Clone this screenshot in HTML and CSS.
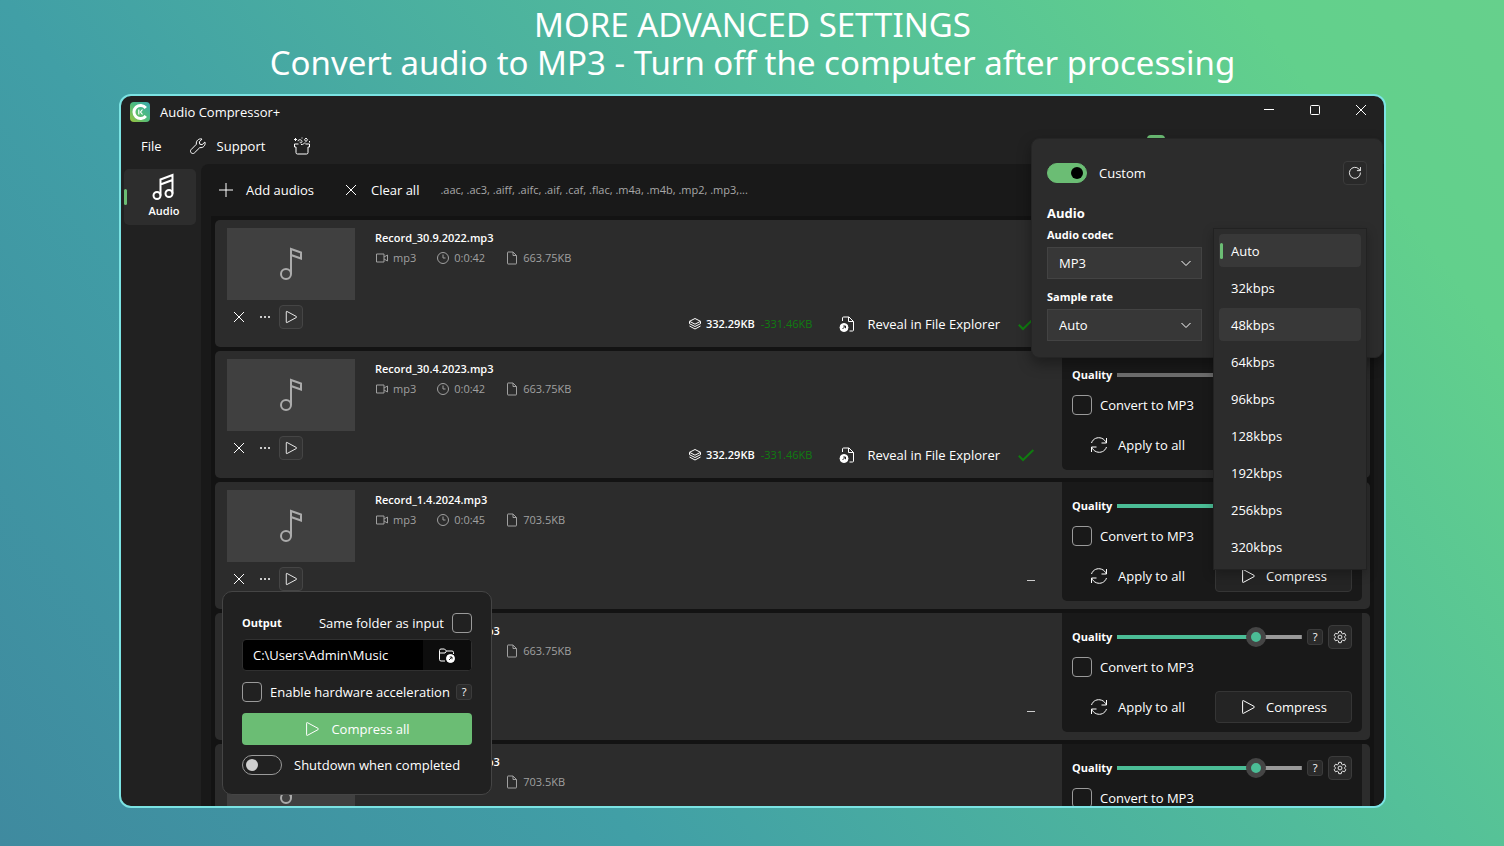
FILE: index.html
```html
<!DOCTYPE html>
<html lang="en">
<head>
<meta charset="utf-8">
<title>Audio Compressor+</title>
<link rel="stylesheet" href="styles.css">
</head>
<body>
<svg class="defs" aria-hidden="true">
  <symbol id="i-x" viewBox="0 0 16 16"><path d="M3 3l10 10M13 3L3 13"/></symbol>
  <symbol id="i-plus" viewBox="0 0 16 16"><path d="M8 1v14M1 8h14"/></symbol>
  <symbol id="i-play" viewBox="0 0 16 16"><path d="M2.600 2.200v11.600q0 1 .9.5l10.600-5.700q.9-.6 0-1.200L3.500 1.700q-.9-.5-.9.5z"/></symbol>
  <symbol id="i-dots" viewBox="0 0 16 16"><path d="M4 8h.01M8 8h.01M12 8h.01" stroke-width="2" stroke-linecap="round"/></symbol>
  <symbol id="i-chev" viewBox="0 0 16 16"><path d="M3.500 6l4.500 4.500L12.500 6"/></symbol>
  <symbol id="i-check" viewBox="0 0 16 16"><path d="M.8 8.800l4.200 4.200L15.300 3"/></symbol>
  <symbol id="i-wrench" viewBox="0 0 16 16"><path d="M14.900 4l-2.800 2.700-2.300-.5-.5-2.300L12 1.100C9 .1 5.700 2.700 6.400 6.200L1 11.700c-1.800 2.100 1.200 5.100 3.300 3.300l5.500-5.400c3.500.7 6.100-2.600 5.100-5.600z"/></symbol>
  <symbol id="i-gift" viewBox="0 0 18 18"><path d="M5.500 7H1.500v3h1.500v5.500q0 1.500 1.500 1.500h9q1.500 0 1.500-1.500V10h1.500V7h-4"/><path d="M5 4.200c0-2 3.800-2 4 .3.100 1.800-2.400 1.700-2 .2M8 7.500c2.500.5 3-2 4.500-1.500M13 1l1.500 1.800L13 4.600l-1.500-1.800zM2.500 1v3M1 2.500h3M16.500 4v1.500M8.500 1h1"/></symbol>
  <symbol id="i-notes" viewBox="0 0 24 28"><circle cx="5" cy="22.500" r="3.500"/><circle cx="17" cy="20.500" r="3.500"/><path d="M8.500 22.500V6.500l12-4.500v18.500M8.500 11.500l12-4.500"/></symbol>
  <symbol id="i-note" viewBox="0 0 24 34"><circle cx="7" cy="27" r="5"/><path d="M12 27V2l10 3.500v6L12 8"/></symbol>
  <symbol id="i-video" viewBox="0 0 14 14"><path d="M1.500 3h7.500v8H1.500zM9 6l3.500-2v6L9 8"/></symbol>
  <symbol id="i-clock" viewBox="0 0 14 14"><circle cx="7" cy="7" r="5.500"/><path d="M7 3.500V7h2.500"/></symbol>
  <symbol id="i-file" viewBox="0 0 14 14"><path d="M3 1h5l3.500 3.500v8q0 .5-.5.5H3q-.5 0-.5-.5v-11Q2.500 1 3 1zM8 1v3.500h3.500"/></symbol>
  <symbol id="i-layers" viewBox="0 0 14 14"><path d="M7 1.500l5.500 2.800L7 7.200 1.500 4.300zM1.500 4.500v2.200L7 9.500l5.500-2.800V4.500M1.500 9L7 12l5.500-3"/></symbol>
  <symbol id="i-reveal" viewBox="0 0 16 16"><path d="M3.500 5V2q0-1 1-1H10l4.500 4.500V14q0 1-1 1h-3M9.500 1v4.500h5"/><circle cx="5" cy="11.500" r="4" fill="currentColor"/><path class="cut" d="M3.500 13L6.500 10M4.300 10h2.200v2.200"/></symbol>
  <symbol id="i-folder" viewBox="0 0 18 18"><path d="M7 15H3q-1.500 0-1.500-1.500v-9Q1.500 3 3 3h3.500L8.500 5H14q1.500 0 1.500 1.500V8M1.500 7H7l1.500-2"/><circle cx="12.500" cy="12.500" r="4" fill="currentColor"/><path class="cut" d="M11 14l3-3M11.700 11H14v2.300"/></symbol>
  <symbol id="i-sync" viewBox="0 0 18 18"><path d="M1.500 7C3 2.500 7.500.8 11.500 2.200 14 3 15.500 5 16.200 6.800M16.500 2v5h-5M16.500 11C15 15.500 10.500 17.200 6.500 15.800 4 15 2.500 13 1.800 11.200M1.500 16v-5h5"/></symbol>
  <symbol id="i-reset" viewBox="0 0 16 16"><path d="M14.200 7.500A6.300 6.300 0 1 1 12.500 3.500l1.500 1.700M14.200 1.200V5.300h-4"/></symbol>
  <symbol id="i-gear" viewBox="0 0 16 16"><circle cx="8" cy="8" r="2.200"/><path d="M6.600 1.500h2.800l.5 2.200 1.200.7 2.100-.7 1.500 2.500L13.100 7.700v.6l1.600 1.500-1.500 2.500-2.100-.7-1.200.7-.5 2.200H6.600l-.5-2.200-1.200-.7-2.100.7-1.500-2.500 1.600-1.500v-.6L1.300 6.200l1.500-2.500 2.100.7 1.200-.7z"/></symbol>
</svg>

<header class="promo">
  <h1>MORE ADVANCED SETTINGS</h1>
  <p>Convert audio to MP3 - Turn off the computer after processing</p>
</header>

<main class="window">
  <div class="titlebar">
    <svg class="logo" viewBox="0 0 20 20"><defs><linearGradient id="lg" x1="0" y1="1" x2="1" y2="0"><stop offset="0" stop-color="#9cc43c"/><stop offset=".5" stop-color="#4fbc7c"/><stop offset="1" stop-color="#3aa8b0"/></linearGradient></defs><rect width="20" height="20" rx="4" fill="url(#lg)"/><path d="M15.800 6A6.600 6.600 0 1 0 15.800 14" fill="none" stroke="#fff" stroke-width="3"/><path d="M8.800 7.500v5M12.500 7.500L10.500 10l2 2.500" fill="none" stroke="#fff" stroke-width="1.200"/></svg>
    <span class="app-name">Audio Compressor+</span>
    <div class="winbtns">
      <button aria-label="Minimize"><svg viewBox="0 0 16 16"><path d="M3 7.500h10"/></svg></button>
      <button aria-label="Maximize"><svg viewBox="0 0 16 16"><rect x="3.500" y="3.500" width="9" height="9" rx="1"/></svg></button>
      <button aria-label="Close"><svg><use href="#i-x"/></svg></button>
    </div>
  </div>
  <nav class="menubar">
    <button>File</button>
    <button class="support"><svg><use href="#i-wrench"/></svg>Support</button>
    <button aria-label="What's new"><svg class="gift"><use href="#i-gift"/></svg></button>
  </nav>
  <div class="body">
    <aside class="sidebar">
      <a class="tab" href="#audio"><svg><use href="#i-notes"/></svg>Audio</a>
    </aside>
    <section class="content">
      <div class="toolbar">
        <button><svg><use href="#i-plus"/></svg>Add audios</button>
        <button><svg><use href="#i-x"/></svg>Clear all</button>
        <span class="formats">.aac, .ac3, .aiff, .aifc, .aif, .caf, .flac, .m4a, .m4b, .mp2, .mp3,...</span>
      </div>
      <div class="list" id="list"></div>
    </section>
  </div>

  <section class="output">
    <div class="row between">
      <strong>Output</strong>
      <label class="check">Same folder as input<input type="checkbox"></label>
    </div>
    <div class="path">
      <input type="text" aria-label="Output folder" value="C:\Users\Admin\Music">
      <button aria-label="Browse"><svg><use href="#i-folder"/></svg></button>
    </div>
    <div class="row between">
      <label class="check"><input type="checkbox">Enable hardware acceleration</label>
      <button class="help" aria-label="Help">?</button>
    </div>
    <button class="primary"><svg><use href="#i-play"/></svg>Compress all</button>
    <label class="switch"><input type="checkbox" role="switch">Shutdown when completed</label>
  </section>

  <span class="peek"></span>
  <section class="custom">
    <div class="row between">
      <label class="switch"><input type="checkbox" role="switch" checked>Custom</label>
      <button class="icon-btn" aria-label="Reset"><svg><use href="#i-reset"/></svg></button>
    </div>
    <h2>Audio</h2>
    <div class="field">
      <label for="codec">Audio codec</label>
      <span class="select"><select id="codec"><option>MP3</option></select><svg><use href="#i-chev"/></svg></span>
    </div>
    <div class="field">
      <label for="rate">Sample rate</label>
      <span class="select"><select id="rate"><option>Auto</option></select><svg><use href="#i-chev"/></svg></span>
    </div>
    <div class="bitrates" role="listbox" aria-label="Bitrate">
      <button role="option" aria-selected="true">Auto</button>
      <button role="option">32kbps</button>
      <button role="option" class="hover">48kbps</button>
      <button role="option">64kbps</button>
      <button role="option">96kbps</button>
      <button role="option">128kbps</button>
      <button role="option">192kbps</button>
      <button role="option">256kbps</button>
      <button role="option">320kbps</button>
    </div>
  </section>
</main>
<script src="app.js"></script>
</body>
</html>
```

FILE: styles.css
```css
* { box-sizing: border-box; }
body {
  margin: 0;
  height: 100vh;
  padding: 6px 118px 38px 119px;
  display: flex;
  flex-direction: column;
  overflow: hidden;
  background: linear-gradient(53deg, #3f8a9f 0%, #419fa6 30%, #54c099 67%, #62d08c 88%, #66d08c 100%);
  color: #fff;
  font: 13px/20px "Open Sans", "Noto Sans", sans-serif;
}
button, input, select { font: inherit; color: inherit; margin: 0; }
button { background: none; border: 0; padding: 0; display: flex; align-items: center; white-space: nowrap; }
svg { width: 16px; height: 16px; fill: none; stroke: currentColor; flex: none; }
.defs { position: absolute; width: 0; height: 0; }
.cut { stroke: #222; }
.promo { text-align: center; padding-bottom: 12px; white-space: nowrap; }
.promo h1, .promo p { margin: 0; font: 33px/38px "Noto Sans", sans-serif; }

.window {
  position: relative;
  flex: 1;
  min-height: 0;
  display: flex;
  flex-direction: column;
  overflow: hidden;
  background: #212121;
  border: 2px solid #7be3e3;
  border-radius: 12px;
}
.titlebar { display: flex; align-items: center; height: 32px; padding-left: 9px; }
.logo { width: 20px; height: 20px; stroke: none; margin-right: 10px; }
.winbtns { display: flex; align-self: flex-start; margin-left: auto; }
.winbtns button { width: 46px; height: 28px; justify-content: center; }
.menubar { display: flex; align-items: center; height: 36px; padding-left: 20px; gap: 28px; }
.support { gap: 11px; }
.menubar .gift { width: 18px; height: 18px; }

.body { flex: 1; min-height: 0; display: flex; }
.sidebar { width: 80px; padding: 5px 5px 0 3px; }
.tab {
  position: relative;
  display: flex;
  flex-direction: column;
  align-items: center;
  height: 56px;
  padding: 4px 0 0 8px;
  background: #2d2d2d;
  border-radius: 5px;
  color: #fff;
  text-decoration: none;
  font-size: 11px;
  font-weight: 600;
}
.tab svg { width: 24px; height: 28px; stroke-width: 2; }
.tab::before {
  content: "";
  position: absolute;
  left: 0;
  top: 20px;
  width: 3px;
  height: 16px;
  border-radius: 2px;
  background: #6bbd74;
}
.content {
  flex: 1;
  min-width: 0;
  display: flex;
  flex-direction: column;
  background: #191919;
  border-radius: 8px 0 0 0;
}
.toolbar { display: flex; align-items: center; height: 52px; padding-left: 17px; gap: 29px; }
.toolbar button { gap: 12px; }
.formats { margin-left: -8px; font-size: 11px; color: #a8a8a8; }
.list {
  flex: 1;
  min-height: 0;
  display: flex;
  flex-direction: column;
  gap: 4px;
  overflow: hidden;
  margin: 0 10px;
  padding: 4px;
  background: #131313;
}
.card {
  flex: none;
  height: 127px;
  display: flex;
  padding: 0 8px 8px 12px;
  background: #2c2c2c;
  border-radius: 5px;
}
.media { width: 128px; padding-top: 8px; }
.thumb {
  height: 72px;
  display: grid;
  place-items: center;
  background: #404040;
  color: #ababab;
}
.thumb svg { width: 24px; height: 34px; stroke-width: 2; }
.media .actions { display: flex; align-items: center; gap: 6px; padding: 5px 0 0 4px; }
.media .mini { gap: 10px; display: flex; }
.icon-btn {
  width: 24px;
  height: 24px;
  justify-content: center;
  border: 1px solid #454545;
  border-radius: 4px;
  background: #333;
}
.icon-btn svg { width: 14px; height: 14px; }
.info { flex: 1; display: flex; flex-direction: column; padding: 8px 20px 0; }
.info .name { font-size: 11px; font-weight: 600; }
.meta { display: flex; gap: 20px; font-size: 11px; color: #a0a0a0; }
.meta span { display: flex; align-items: center; gap: 4px; }
.meta svg { width: 14px; height: 14px; }
.status { display: flex; align-items: center; justify-content: flex-end; margin-top: auto; padding: 0 8px 5px 0; }
.size { display: flex; align-items: center; gap: 4px; font-size: 11px; font-weight: 600; }
.size svg { width: 14px; height: 14px; }
.saved { margin-left: 6px; font-size: 11px; color: #107c10; }
.reveal { margin: 0 18px 0 27px; gap: 12px; }
.ok { color: #107c10; stroke-width: 2; }
.dash { width: 8px; height: 1px; margin: 0 -1px 15px 0; background: #ccc; }
.opts {
  width: 300px;
  display: flex;
  flex-direction: column;
  padding: 11px 10px 9px;
  background: #191919;
  border-radius: 0 0 5px 5px;
}
.quality { display: flex; align-items: center; height: 25px; font-size: 11px; font-weight: 700; }
.quality label { margin-right: 5px; }
.quality .help { margin: 0 5px 0 5px; }
.quality .icon-btn, .custom .icon-btn { background: #292929; border-color: #3b3b3b; }
.slider {
  appearance: none;
  flex: 1;
  min-width: 0;
  height: 20px;
  background: linear-gradient(90deg, #4bbd96 75%, #999 75%) center / 100% 4px no-repeat;
}
.slider::-webkit-slider-thumb {
  appearance: none;
  width: 20px;
  height: 20px;
  border: 5px solid #454545;
  border-radius: 50%;
  background: #4bbd96;
}
.slider:disabled { background: linear-gradient(#6d6d6d, #6d6d6d) center / 100% 4px no-repeat; }
.help {
  width: 16px;
  height: 16px;
  justify-content: center;
  border: 1px solid #3b3b3b;
  border-radius: 3px;
  background: #2b2b2b;
  font-size: 11px;
  font-weight: 400;
}
.check { display: flex; align-items: center; gap: 8px; white-space: nowrap; }
.check input {
  appearance: none;
  width: 20px;
  height: 20px;
  border: 1px solid #9a9a9a;
  border-radius: 4px;
}
.opts .check { margin-top: 8px; }
.cmds { display: flex; align-items: center; justify-content: space-between; margin-top: auto; }
.cmds button { gap: 10px; }
.cmds .apply { padding-left: 18px; }
.cmds .apply svg { width: 18px; height: 18px; }
.cmds .go {
  width: 137px;
  height: 32px;
  justify-content: center;
  border: 1px solid #353535;
  border-radius: 4px;
  background: #242424;
}

.row { display: flex; align-items: center; }
.between { justify-content: space-between; }
.output {
  position: absolute;
  left: 101px;
  bottom: 11px;
  width: 270px;
  padding: 21px 19px 19px;
  display: flex;
  flex-direction: column;
  background: #212121;
  border: 1px solid #454545;
  border-radius: 10px;
}
.output strong { font-size: 11px; }
.path {
  display: flex;
  height: 32px;
  margin: 6px 0 11px;
  border: 1px solid #303030;
  border-radius: 4px;
  background: #000;
  overflow: hidden;
}
.path input { flex: 1; min-width: 0; border: 0; background: none; padding: 0 10px; }
.path button { width: 48px; justify-content: center; background: #0d0d0d; }
.path svg { width: 18px; height: 18px; }
.primary {
  height: 32px;
  margin: 11px 0 10px;
  justify-content: center;
  gap: 11px;
  border-radius: 4px;
  background: #6bbd74;
}
.switch { display: flex; align-items: center; gap: 12px; }
.switch input {
  appearance: none;
  width: 40px;
  height: 20px;
  display: flex;
  align-items: center;
  padding: 0 3px;
  border: 1px solid #9a9a9a;
  border-radius: 10px;
}
.switch input::before {
  content: "";
  width: 12px;
  height: 12px;
  border-radius: 50%;
  background: #cfcfcf;
}
.switch input:checked { justify-content: flex-end; background: #6bbd74; border-color: #6bbd74; }
.switch input:checked::before { background: #000; }

.peek {
  position: absolute;
  right: 219px;
  top: 39px;
  width: 18px;
  height: 12px;
  border-radius: 4px;
  background: #6bbd74;
}
.custom {
  position: absolute;
  right: 1px;
  top: 42px;
  width: 352px;
  padding: 22px 15px 16px;
  background: #2c2c2c;
  border: 1px solid #252525;
  border-radius: 8px;
  box-shadow: 0 6px 14px rgba(0, 0, 0, .35);
}
.custom h2 { margin: 18px 0 2px; font-size: 13px; line-height: 20px; }
.field { width: 155px; font-size: 11px; font-weight: 700; }
.field + .field { margin-top: 8px; }
.field label { display: block; line-height: 20px; margin-bottom: 2px; }
.select { display: grid; align-items: center; font-size: 13px; font-weight: 400; }
.select select, .select svg { grid-area: 1 / 1; }
.select svg { justify-self: end; margin-right: 8px; pointer-events: none; }
.select select {
  appearance: none;
  height: 32px;
  padding: 0 11px;
  border: 1px solid #434343;
  border-radius: 0;
  background: #373737;
}
.bitrates {
  position: absolute;
  right: 15px;
  top: 89px;
  width: 154px;
  display: flex;
  flex-direction: column;
  gap: 4px;
  padding: 5px 5px 6px;
  background: #2c2c2c;
  border: 1px solid #222;
  box-shadow: 0 4px 10px rgba(0, 0, 0, .25);
}
.bitrates button { position: relative; height: 33px; padding-left: 12px; border-radius: 4px; }
.bitrates .hover { background: #383838; }
.bitrates [aria-selected] { background: #383838; }
.bitrates [aria-selected]::before {
  content: "";
  position: absolute;
  left: 1px;
  top: 9px;
  width: 3px;
  height: 16px;
  border-radius: 2px;
  background: #6bbd74;
}
```

FILE: app.js
```js
const files = [
  { name: "Record_30.9.2022.mp3", time: "0:0:42", size: "663.75KB", done: true },
  { name: "Record_30.4.2023.mp3", time: "0:0:42", size: "663.75KB", done: true },
  { name: "Record_1.4.2024.mp3", time: "0:0:45", size: "703.5KB" },
  { name: "Record_30.10.2023.mp3", time: "0:0:42", size: "663.75KB" },
  { name: "Record_18.10.2023.mp3", time: "0:0:45", size: "703.5KB" }
];
const icon = (id, cls = "") => `<svg class="${cls}"><use href="#i-${id}"/></svg>`;

document.getElementById("list").innerHTML = files.map((f, i) => `
  <article class="card">
    <div class="media">
      <div class="thumb">${icon("note")}</div>
      <div class="actions">
        <div class="mini">
          <button aria-label="Remove">${icon("x")}</button>
          <button aria-label="More">${icon("dots")}</button>
        </div>
        <button class="icon-btn" aria-label="Play">${icon("play")}</button>
      </div>
    </div>
    <div class="info">
      <span class="name">${f.name}</span>
      <div class="meta">
        <span>${icon("video")}mp3</span>
        <span>${icon("clock")}${f.time}</span>
        <span>${icon("file")}${f.size}</span>
      </div>
      ${f.done ? `<div class="status">
        <span class="size">${icon("layers")}332.29KB</span>
        <span class="saved">-331.46KB</span>
        <button class="reveal">${icon("reveal")}Reveal in File Explorer</button>
        ${icon("check", "ok")}
      </div>` : `<div class="status"><span class="dash"></span></div>`}
    </div>
    <div class="opts">
      <div class="quality">
        <label for="q${i}">Quality</label>
        <input class="slider" id="q${i}" type="range" value="78" ${f.done ? "disabled" : ""}>
        <button class="help" aria-label="Help">?</button>
        <button class="icon-btn" aria-label="Settings">${icon("gear")}</button>
      </div>
      <label class="check"><input type="checkbox">Convert to MP3</label>
      <div class="cmds">
        <button class="apply">${icon("sync")}Apply to all</button>
        <button class="go">${icon("play")}Compress</button>
      </div>
    </div>
  </article>`).join("");
```
